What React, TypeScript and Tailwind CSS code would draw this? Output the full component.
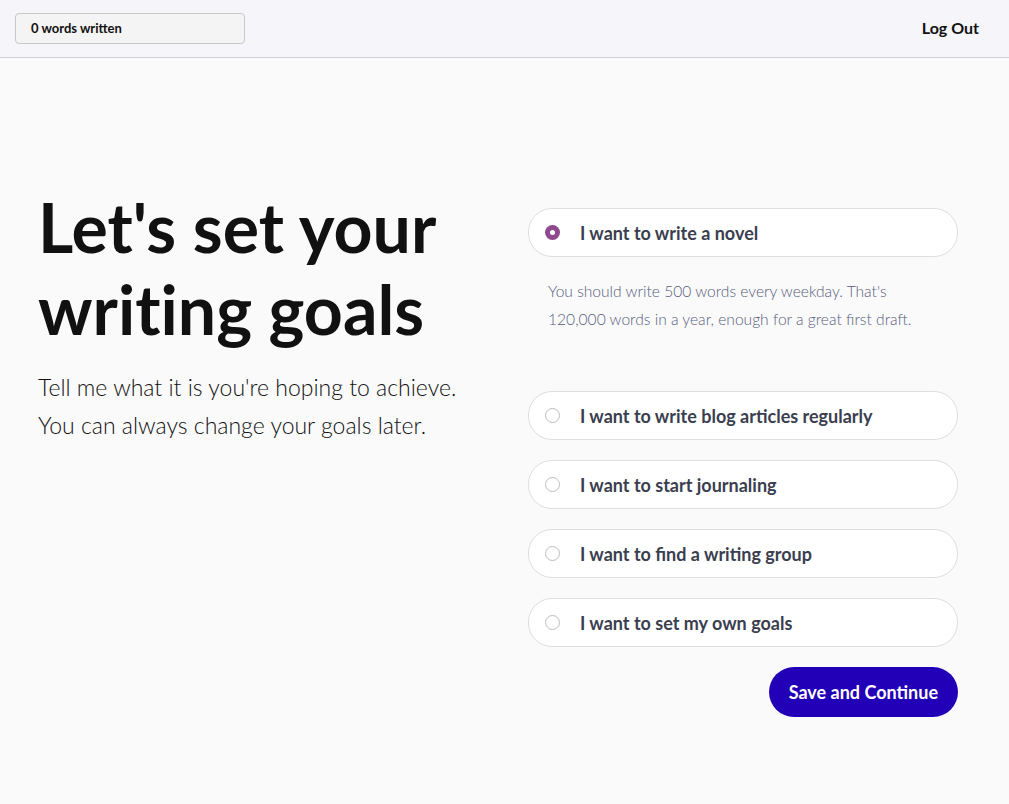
import { useState } from 'react';

const GOALS = [
  'I want to write a novel',
  'I want to write blog articles regularly',
  'I want to start journaling',
  'I want to find a writing group',
  'I want to set my own goals',
];

export default function App() {
  const [selected, setSelected] = useState(0);

  return (
    <div className="min-h-screen bg-[#fafafa] font-['Lato',sans-serif] text-[#111]">
      {/* Header */}
      <header className="h-[58px] bg-[#f5f5fa] border-b border-[#cfcfd4] flex items-start justify-between pl-[15px] pr-[30px]">
        <div className="mt-[13px] w-[230px] h-[31px] pt-[1px] rounded-[4px] border border-[#c8c8c8] bg-[#f4f4f4] flex items-center pl-[15px] text-[13px] font-bold text-[#111]">
          0 words written
        </div>
        <button className="mt-[16px] text-[16px] font-bold text-[#111]">Log Out</button>
      </header>

      {/* Content */}
      <main className="flex pl-[38px] pr-[51px] pt-[150px]">
        <div className="flex-1">
          <h1 className="-mt-[22px] text-[68px] font-bold leading-[82px] text-[#111] [font-variant-ligatures:none]">
            Let's set your
            <br />
            writing goals
          </h1>
          <p className="mt-[18px] text-[23px] font-light leading-[38px] text-[#111]">
            Tell me what it is you're hoping to achieve.
            <br />
            You can always change your goals later.
          </p>
        </div>

        <div className="w-[430px]">
          {GOALS.map((goal, i) => (
            <div key={goal}>
              <button
                onClick={() => setSelected(i)}
                className={
                  'w-full h-[49px] rounded-[24px] border border-[#dedede] bg-white flex items-center pl-[16px] text-left ' +
                  (i > 1 ? 'mt-[20px]' : '')
                }
              >
                {selected === i ? (
                  <span className="w-[15px] h-[15px] rounded-full bg-[#8e4a8d] flex items-center justify-center">
                    <span className="w-[5px] h-[5px] rounded-full bg-white" />
                  </span>
                ) : (
                  <span className="w-[15px] h-[15px] rounded-full border border-[#bdbdbd] bg-white" />
                )}
                <span className="ml-[20px] pt-[2px] text-[18px] font-bold text-[#3a3e4f]">{goal}</span>
              </button>
              {i === 0 && (
                <p className="pl-[20px] pr-[20px] pt-[20px] pb-[58px] text-[15.6px] font-light leading-[28px] text-[#575d7c]">
                  You should write 500 words every weekday. That's 120,000 words in a year, enough for a great first draft.
                </p>
              )}
            </div>
          ))}
          <div className="flex justify-end mt-[20px]">
            <button className="h-[50px] px-[20px] rounded-full bg-[#2200b8] text-white text-[18px] font-bold">
              Save and Continue
            </button>
          </div>
        </div>
      </main>
    </div>
  );
}
